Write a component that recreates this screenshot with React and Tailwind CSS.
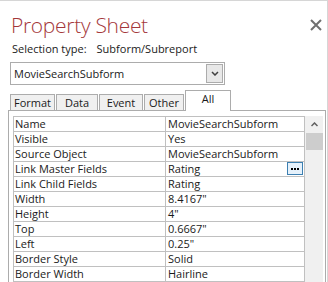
import React from "react";

const rows = [
  ["Name", "MovieSearchSubform"],
  ["Visible", "Yes"],
  ["Source Object", "MovieSearchSubform"],
  ["Link Master Fields", "Rating", true],
  ["Link Child Fields", "Rating"],
  ["Width", '8.4167"'],
  ["Height", '4"'],
  ["Top", '0.6667"'],
  ["Left", '0.25"'],
  ["Border Style", "Solid"],
  ["Border Width", "Hairline"],
];

const tabs = [
  { label: "Format", w: "w-[45px]" },
  { label: "Data", w: "w-[42px]" },
  { label: "Event", w: "w-[44px]" },
  { label: "Other", w: "w-[40px]" },
];

const App = () => {
  return (
    <div
      className="w-[328px] h-[282px] overflow-hidden bg-white border-t border-r border-[#d6d6d6] text-[#1a1a1a] select-none"
      style={{ fontFamily: '"Open Sans", "Noto Sans", sans-serif' }}
    >
      {/* Header */}
      <div className="flex justify-between items-start h-[40px]">
        <h1 className="pl-[11px] pt-[11px] text-[21px] leading-[26px] font-light text-[#a4373a] tracking-[-0.3px]">
          Property Sheet
        </h1>
        <div className="pt-[18px] pr-[5px]">
          <svg width="12" height="12" viewBox="0 0 12 12">
            <path d="M1 1 L11 11 M11 1 L1 11" stroke="#707070" strokeWidth="2" />
          </svg>
        </div>
      </div>

      {/* Selection type */}
      <div className="flex pl-[12px] text-[11px] leading-[16px] h-[21px]">
        <span>Selection type:</span>
        <span className="ml-[10px]">Subform/Subreport</span>
      </div>

      {/* Combo */}
      <div className="ml-[10px] w-[215px] h-[23px] border border-[#acacac] flex items-center justify-between">
        <span className="pl-[3px] text-[11px] leading-[16px]">MovieSearchSubform</span>
        <div className="mr-[1px] w-[17px] h-[19px] bg-[#e8e8e8] border border-[#acacac] flex items-center justify-center">
          <svg width="8" height="5" viewBox="0 0 8 5">
            <path d="M1 1 L4 4 L7 1" stroke="#404040" strokeWidth="1.5" fill="none" />
          </svg>
        </div>
      </div>

      {/* Tabs */}
      <div className="flex items-end h-[21px] mt-[4px] pl-[10px]">
        {tabs.map((t) => (
          <div
            key={t.label}
            className={`${t.w} h-[16px] mr-[1px] bg-[#f0f0f0] border border-b-0 border-[#acacac] text-[11px] leading-[15px] text-center`}
          >
            {t.label}
          </div>
        ))}
        <div className="w-[46px] h-[21px] bg-white border border-b-0 border-[#acacac] text-[11px] leading-[16px] text-center relative z-10 -mb-px">
          All
        </div>
      </div>

      {/* Panel */}
      <div className="ml-[8px] w-[318px] h-[200px] border-l border-t border-r border-[#acacac] pl-[4px] pt-[5px] flex">
        <div className="w-[292px] border-l border-t border-[#c0c0c0]">
          {rows.map(([k, v, builder]) => (
            <div key={k} className="flex h-[15px] border-b border-[#c0c0c0] text-[11px] leading-[14px]">
              <div className="w-[152px] pl-[1px] border-r border-[#c0c0c0] whitespace-nowrap">{k}</div>
              <div className="flex-1 pl-[2px] border-r border-[#c0c0c0] flex justify-between">
                <span className="whitespace-nowrap">{v}</span>
                {builder && (
                  <span className="w-[16px] h-[13px] bg-[#e5f1fb] border border-[#3c7fb1] flex items-center justify-center gap-[1px] mr-[1px]">
                    <span className="w-[2px] h-[2px] bg-black" />
                    <span className="w-[2px] h-[2px] bg-black" />
                    <span className="w-[2px] h-[2px] bg-black" />
                  </span>
                )}
              </div>
            </div>
          ))}
        </div>
        {/* Scrollbar */}
        <div className="w-[18px] h-[166px] bg-[#f0f0f0] flex flex-col items-center">
          <div className="h-[17px] flex items-center justify-center">
            <svg width="7" height="5" viewBox="0 0 7 5">
              <path d="M0.5 4 L3.5 1 L6.5 4" stroke="#606060" strokeWidth="1.5" fill="none" />
            </svg>
          </div>
          <div className="w-[17px] h-[17px] bg-[#cdcdcd]" />
        </div>
      </div>
    </div>
  );
};

export default App;
